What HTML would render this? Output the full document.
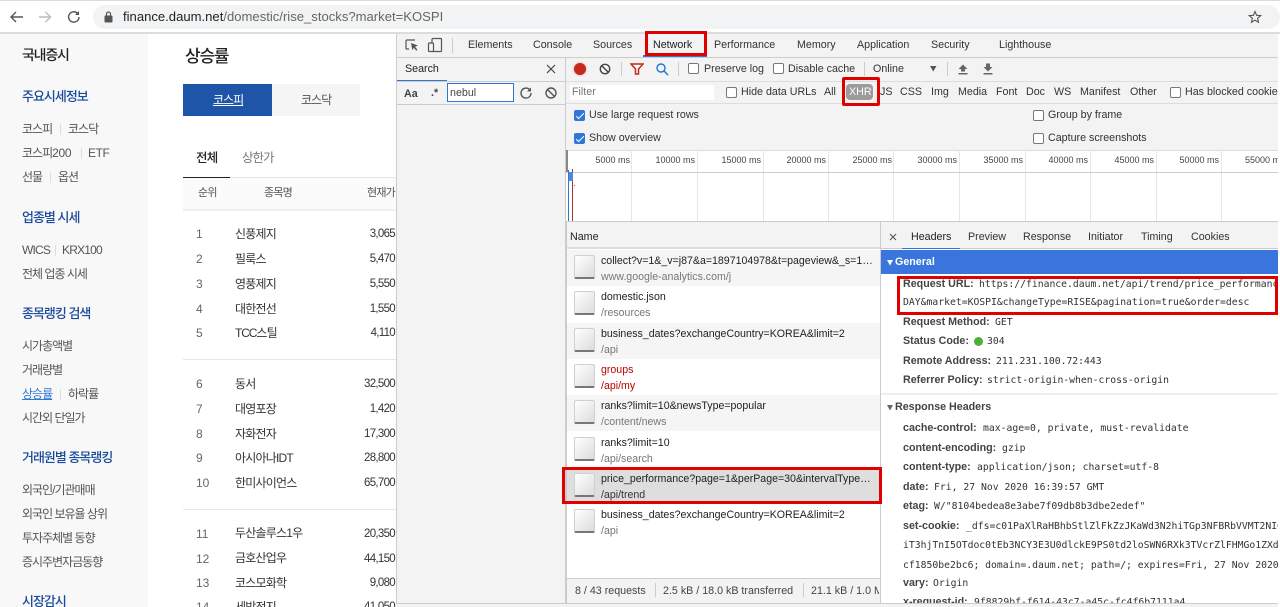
<!DOCTYPE html>
<html lang="ko"><head><meta charset="utf-8"><title>finance.daum.net</title>
<style>
*{box-sizing:border-box}
html,body{margin:0;padding:0;width:1280px;height:607px;overflow:hidden;background:#fff}
body{position:relative;font-family:"Liberation Sans",sans-serif;font-size:10.7px;color:#333}
.a{position:absolute}
.t{position:absolute;white-space:nowrap;line-height:16px;height:16px;margin-top:1px}
.k{font-family:"Liberation Sans","Noto Sans CJK KR",sans-serif;font-size:12px;letter-spacing:-1px;color:#555}
.h{font-family:"Liberation Sans","Noto Sans CJK KR",sans-serif;font-size:13px;letter-spacing:-1px;color:#1a4a9a;font-weight:500}
.n{font-family:"Liberation Sans","Noto Sans CJK KR",sans-serif;font-size:12px;letter-spacing:-.8px;color:#333}
.r{font-size:12px;color:#666;margin-top:0}
.v{font-size:11.5px;letter-spacing:-.7px;color:#333;text-align:right;right:885px;margin-top:0}
.sep{position:absolute;width:1px;height:11px;background:#ddd}
.cb{position:absolute;width:11px;height:11px;border:1px solid #777;border-radius:2px;background:#fff}
.cb.on{background:#2f76d8;border-color:#2f76d8}
.cb.on:after{content:"";position:absolute;left:3px;top:0;width:3px;height:7px;border:solid #fff;border-width:0 1.5px 1.5px 0;transform:rotate(45deg)}
.d{position:absolute;height:1px;background:#ccc}
.vs{position:absolute;width:1px;background:#ddd}
.tick{position:absolute;text-align:right;width:60px;font-size:9px;line-height:14px;top:153px;color:#444;white-space:nowrap}
.gl{position:absolute;width:1px;top:150px;height:72px;background:#e6e6e6}
.row{position:absolute;left:567px;width:313px;height:36.3px;overflow:hidden}
.row i{position:absolute;left:7px;top:5px;width:21px;height:24px;background:linear-gradient(135deg,#fff,#dcdcdc);border:1px solid #d0d0d0;border-bottom:2px solid #777;border-radius:2px}
.row b,.row u{position:absolute;left:34px;font-weight:400;text-decoration:none;white-space:nowrap;line-height:14px;font-size:10.6px}
.row b{top:4px;color:#222}.row u{top:20px;color:#777}
.m{font-family:"DejaVu Sans Mono",monospace;font-size:9.75px;color:#333;margin-top:2px}
.l{font-weight:700;color:#444}
.red{position:absolute;border:3px solid #e00000;z-index:5}
</style></head><body>

<!-- browser bar -->
<div class="a" style="left:0;top:0;width:1280px;height:1px;background:#ddd"></div>
<div class="a" style="left:0;top:32px;width:1280px;height:2px;background:#dcdcdc"></div>
<div class="a" style="left:93px;top:5px;width:1187px;height:24px;border-radius:12px;background:#f1f3f4"></div>
<svg class="a" style="left:8px;top:8px" width="76" height="18" fill="none" stroke-width="1.4">
<path d="M15 9H3.500M8 4 3 9 8 14" stroke="#555"/>
<path d="M31 9h11.500M37.500 4 42.500 9 37.500 14" stroke="#bbb"/>
<path d="M71 9a5.200 5.200 0 1 1-1.500-3.700" stroke="#555"/><path d="M71 3v4h-4z" fill="#555"/>
</svg>
<svg class="a" style="left:104px;top:11px" width="9" height="12"><rect x="0.500" y="4.500" width="8" height="7" rx="1" fill="#555"/><path d="M2.500 5V3a2 2 0 0 1 4 0v2" fill="none" stroke="#555" stroke-width="1.200"/></svg>
<div class="t" style="left:123px;top:8px;font-size:13.08px;color:#666"><span style="color:#222">finance.daum.net</span>/domestic/rise_stocks?market=KOSPI</div>
<svg class="a" style="left:1248px;top:10px" width="14" height="14" fill="none" stroke="#555" stroke-width="1.100"><path d="M7 1.500 8.600 5.300 12.700 5.600 9.600 8.300 10.500 12.300 7 10.200 3.500 12.300 4.400 8.300 1.300 5.600 5.400 5.300Z"/></svg>

<!-- sidebar -->
<div class="a" style="left:0;top:34px;width:148px;height:573px;background:#f8f8f8"></div>
<div class="t" style="left:22px;top:46px;font-family:'Liberation Sans','Noto Sans CJK KR',sans-serif;font-size:14px;font-weight:500;letter-spacing:-1.200px;color:#222">국내증시</div>
<div class="t h" style="left:22px;top:88px">주요시세정보</div>
<div class="t k" style="left:22px;top:120px">코스피</div><div class="sep" style="left:60px;top:124px"></div><div class="t k" style="left:68px;top:120px">코스닥</div>
<div class="t k" style="left:22px;top:144px">코스피<span style="letter-spacing:-.3px">200</span></div><div class="sep" style="left:81px;top:148px"></div><div class="t k" style="left:88px;top:144px;letter-spacing:-.4px">ETF</div>
<div class="t k" style="left:22px;top:168px">선물</div><div class="sep" style="left:50px;top:172px"></div><div class="t k" style="left:58px;top:168px">옵션</div>
<div class="t h" style="left:22px;top:209px">업종별 시세</div>
<div class="t k" style="left:22px;top:241px;letter-spacing:-.8px">WICS</div><div class="sep" style="left:55px;top:245px"></div><div class="t k" style="left:62px;top:241px;letter-spacing:-.8px">KRX100</div>
<div class="t k" style="left:22px;top:265px">전체 업종 시세</div>
<div class="t h" style="left:22px;top:305px">종목랭킹 검색</div>
<div class="t k" style="left:22px;top:337px">시가총액별</div>
<div class="t k" style="left:22px;top:361px">거래량별</div>
<div class="t k" style="left:22px;top:385px;color:#2f78d8;text-decoration:underline">상승률</div><div class="sep" style="left:60px;top:389px"></div><div class="t k" style="left:68px;top:385px">하락률</div>
<div class="t k" style="left:22px;top:409px">시간외 단일가</div>
<div class="t h" style="left:22px;top:449px">거래원별 종목랭킹</div>
<div class="t k" style="left:22px;top:481px">외국인/기관매매</div>
<div class="t k" style="left:22px;top:505px">외국인 보유율 상위</div>
<div class="t k" style="left:22px;top:529px">투자주체별 동향</div>
<div class="t k" style="left:22px;top:553px">증시주변자금동향</div>
<div class="t h" style="left:22px;top:593px">시장감시</div>

<!-- main -->
<div class="t" style="left:185px;top:48px;font-family:'Liberation Sans','Noto Sans CJK KR',sans-serif;font-size:17px;font-weight:500;letter-spacing:-1.200px;color:#222">상승률</div>
<div class="a" style="left:183px;top:84px;width:89px;height:32px;background:#1e55a8"></div>
<div class="a" style="left:272px;top:84px;width:88px;height:32px;background:#f5f5f5"></div>
<div class="t k" style="left:213px;top:91px;color:#fff;text-decoration:underline">코스피</div>
<div class="t k" style="left:301px;top:91px">코스닥</div>
<div class="t" style="left:196px;top:149px;font-family:'Liberation Sans','Noto Sans CJK KR',sans-serif;font-size:12.500px;font-weight:500;letter-spacing:-.8px;color:#222">전체</div>
<div class="t k" style="left:242px;top:149px;font-size:12.500px;color:#777">상한가</div>
<div class="a" style="left:183px;top:177px;width:213px;height:1px;background:#e4e4e4"></div>
<div class="a" style="left:183px;top:177px;width:47px;height:1px;background:#222"></div>
<div class="a" style="left:183px;top:178px;width:213px;height:31px;background:#fbfbfb"></div>
<div class="a" style="left:183px;top:209px;width:213px;height:2px;background:#eee"></div>
<div class="t k" style="left:198px;top:184px;font-size:11px;letter-spacing:-.8px">순위</div>
<div class="t k" style="left:264px;top:184px;font-size:11px;letter-spacing:-.8px">종목명</div>
<div class="t k" style="left:367px;top:184px;font-size:11px;letter-spacing:-.8px">현재가</div>
<div class="a" style="left:183px;top:359px;width:213px;height:1px;background:#e8e8e8"></div>
<div class="a" style="left:183px;top:509px;width:213px;height:1px;background:#e8e8e8"></div>

<div class="t r" style="left:196px;top:226px">1</div><div class="t n" style="left:235px;top:225px">신풍제지</div><div class="t v" style="top:226px">3,065</div>
<div class="t r" style="left:196px;top:251px">2</div><div class="t n" style="left:235px;top:250px">필룩스</div><div class="t v" style="top:251px">5,470</div>
<div class="t r" style="left:196px;top:276px">3</div><div class="t n" style="left:235px;top:275px">영풍제지</div><div class="t v" style="top:276px">5,550</div>
<div class="t r" style="left:196px;top:301px">4</div><div class="t n" style="left:235px;top:300px">대한전선</div><div class="t v" style="top:301px">1,550</div>
<div class="t r" style="left:196px;top:325px">5</div><div class="t n" style="left:235px;top:324px"><span style="letter-spacing:-1.100px">TCC</span>스틸</div><div class="t v" style="top:325px">4,110</div>
<div class="t r" style="left:196px;top:376px">6</div><div class="t n" style="left:235px;top:375px">동서</div><div class="t v" style="top:376px">32,500</div>
<div class="t r" style="left:196px;top:401px">7</div><div class="t n" style="left:235px;top:400px">대영포장</div><div class="t v" style="top:401px">1,420</div>
<div class="t r" style="left:196px;top:426px">8</div><div class="t n" style="left:235px;top:425px">자화전자</div><div class="t v" style="top:426px">17,300</div>
<div class="t r" style="left:196px;top:450px">9</div><div class="t n" style="left:235px;top:449px">아시아나IDT</div><div class="t v" style="top:450px">28,800</div>
<div class="t r" style="left:196px;top:475px">10</div><div class="t n" style="left:235px;top:474px">한미사이언스</div><div class="t v" style="top:475px">65,700</div>
<div class="t r" style="left:196px;top:526px">11</div><div class="t n" style="left:235px;top:524px">두산솔루스1우</div><div class="t v" style="top:526px">20,350</div>
<div class="t r" style="left:196px;top:551px">12</div><div class="t n" style="left:235px;top:549px">금호산업우</div><div class="t v" style="top:551px">44,150</div>
<div class="t r" style="left:196px;top:575px">13</div><div class="t n" style="left:235px;top:574px">코스모화학</div><div class="t v" style="top:575px">9,080</div>
<div class="t r" style="left:196px;top:599px">14</div><div class="t n" style="left:235px;top:598px">세방전지</div><div class="t v" style="top:599px">41,050</div>

<!-- devtools base -->
<div class="a" style="left:396px;top:34px;width:882px;height:573px;background:#f3f3f3;border-left:1px solid #ccc"></div>
<div class="d" style="left:397px;top:57px;width:881px"></div>
<svg class="a" style="left:404px;top:37px" width="50" height="17" fill="none" stroke="#555" stroke-width="1.200">
<path d="M11 3H3a1 1 0 0 0-1 1v7a1 1 0 0 0 1 1h2"/><path d="M7 6l7 2.500-3 1.200 2.500 3-1.200 1-2.500-3-1.500 2.500z" fill="#555" stroke="none"/>
<rect x="28" y="1.500" width="9.500" height="13" rx="1"/><rect x="24.500" y="6" width="5" height="8.500" rx="1" fill="#f3f3f3"/>
</svg>
<div class="a" style="left:452px;top:38px;width:1px;height:15px;background:#ccc"></div>
<div class="t" style="left:468px;top:36px">Elements</div>
<div class="t" style="left:533px;top:36px">Console</div>
<div class="t" style="left:593px;top:36px">Sources</div>
<div class="a" style="left:643px;top:55px;width:64px;height:2px;background:#2f76d8"></div>
<div class="t" style="left:653px;top:36px;color:#222">Network</div>
<div class="t" style="left:714px;top:36px">Performance</div>
<div class="t" style="left:797px;top:36px">Memory</div>
<div class="t" style="left:857px;top:36px">Application</div>
<div class="t" style="left:931px;top:36px">Security</div>
<div class="t" style="left:999px;top:36px">Lighthouse</div>
<div class="red" style="left:645px;top:31px;width:62px;height:25px"></div>

<!-- search panel -->
<div class="vs" style="left:565px;top:58px;height:545px;background:#ccc"></div>
<div class="t" style="left:405px;top:60px;color:#222">Search</div>
<div class="a" style="left:397px;top:80px;width:50px;height:1px;background:#2f76d8"></div>
<div class="d" style="left:397px;top:81px;width:168px"></div>
<svg class="a" style="left:545px;top:63px" width="12" height="12" stroke="#444" stroke-width="1.200"><path d="M2 2l8 8M10 2l-8 8"/></svg>
<div class="t" style="left:404px;top:85px;font-weight:700;color:#444">Aa</div>
<div class="t" style="left:431px;top:84px;font-weight:700;color:#444">.*</div>
<div class="a" style="left:447px;top:83px;width:67px;height:19px;background:#fff;border:1px solid #2f76d8"></div>
<div class="t" style="left:450px;top:84px;color:#444">nebul</div>
<svg class="a" style="left:519px;top:86px" width="42" height="14" fill="none" stroke="#555" stroke-width="1.400"><path d="M12 7a5 5 0 1 1-1.500-3.500"/><path d="M12 1.500v4H8z" fill="#555" stroke="none"/><circle cx="32" cy="7" r="5"/><path d="M28.500 3.500l7 7"/></svg>
<div class="d" style="left:397px;top:104px;width:168px"></div>

<!-- network toolbar -->
<div class="a" style="left:574px;top:63px;width:12px;height:12px;border-radius:50%;background:#c5281c;box-shadow:0 0 2px #e88"></div>
<svg class="a" style="left:599px;top:63px" width="12" height="12" fill="none" stroke="#444" stroke-width="1.400"><circle cx="6" cy="6" r="4.700"/><path d="M2.700 2.700l6.600 6.600"/></svg>
<div class="a" style="left:621px;top:62px;width:1px;height:14px;background:#ccc"></div>
<svg class="a" style="left:630px;top:63px" width="14" height="12"><path d="M1 1h12L8.500 6v5h-3V6z" fill="#fff" stroke="#c5281c" stroke-width="1.500"/></svg>
<svg class="a" style="left:655px;top:62px" width="14" height="14" fill="none" stroke="#1a73d8" stroke-width="1.400"><circle cx="6" cy="6" r="4"/><path d="M9 9l4 4"/></svg>
<div class="a" style="left:678px;top:62px;width:1px;height:14px;background:#ccc"></div>
<div class="cb" style="left:688px;top:63px"></div><div class="t" style="left:704px;top:60px">Preserve log</div>
<div class="cb" style="left:773px;top:63px"></div><div class="t" style="left:788px;top:60px">Disable cache</div>
<div class="a" style="left:864px;top:62px;width:1px;height:14px;background:#ccc"></div>
<div class="t" style="left:873px;top:60px">Online</div>
<svg class="a" style="left:929px;top:65px" width="9" height="7"><path d="M1 1h6.500L4.200 6.500z" fill="#555"/></svg>
<div class="a" style="left:947px;top:62px;width:1px;height:14px;background:#ccc"></div>
<svg class="a" style="left:957px;top:62px" width="38" height="14" fill="#666"><path d="M6 2.500 10.500 7H8v2.500H4V7H1.500zM1.500 11h9v1.500h-9z"/><path d="M29 1.500h4V5h2.500L31 9.500 26.500 5H29zM26.500 11h9v1.500h-9z"/></svg>
<div class="d" style="left:566px;top:81px;width:712px;background:#ddd"></div>

<!-- filter row -->
<div class="a" style="left:570px;top:85px;width:144px;height:15px;background:#fff"></div>
<div class="t" style="left:572px;top:83px;color:#777">Filter</div>
<div class="cb" style="left:726px;top:87px"></div><div class="t" style="left:741px;top:83px">Hide data URLs</div>
<div class="t" style="left:824px;top:83px">All</div>
<div class="a" style="left:846px;top:84px;width:27px;height:16px;border-radius:4px;background:#9b9b9b"></div>
<div class="t" style="left:849px;top:83px;color:#fff">XHR</div>
<div class="red" style="left:842px;top:77px;width:38px;height:29px;border-radius:2px"></div>
<div class="t" style="left:880px;top:83px">JS</div>
<div class="t" style="left:900px;top:83px">CSS</div>
<div class="t" style="left:931px;top:83px">Img</div>
<div class="t" style="left:958px;top:83px">Media</div>
<div class="t" style="left:996px;top:83px">Font</div>
<div class="t" style="left:1026px;top:83px">Doc</div>
<div class="t" style="left:1054px;top:83px">WS</div>
<div class="t" style="left:1080px;top:83px">Manifest</div>
<div class="t" style="left:1130px;top:83px">Other</div>
<div class="cb" style="left:1170px;top:87px"></div><div class="t" style="left:1185px;top:83px;width:93px;overflow:hidden">Has blocked cookies</div>
<div class="d" style="left:566px;top:103px;width:712px;background:#ddd"></div>

<!-- settings -->
<div class="cb on" style="left:574px;top:110px"></div><div class="t" style="left:589px;top:106px">Use large request rows</div>
<div class="cb on" style="left:574px;top:133px"></div><div class="t" style="left:589px;top:129px">Show overview</div>
<div class="cb" style="left:1033px;top:110px"></div><div class="t" style="left:1048px;top:106px">Group by frame</div>
<div class="cb" style="left:1033px;top:133px"></div><div class="t" style="left:1048px;top:129px">Capture screenshots</div>

<!-- overview -->
<div class="a" style="left:566px;top:150px;width:712px;height:72px;background:#fff;border-top:1px solid #ddd"></div>
<div class="a" style="left:566px;top:150px;width:2px;height:22px;background:#888"></div>
<div class="gl" style="left:631px"></div><div class="gl" style="left:697px"></div><div class="gl" style="left:763px"></div><div class="gl" style="left:828px"></div><div class="gl" style="left:893px"></div><div class="gl" style="left:959px"></div><div class="gl" style="left:1025px"></div><div class="gl" style="left:1090px"></div><div class="gl" style="left:1156px"></div><div class="gl" style="left:1221px"></div>
<div class="tick" style="left:570px">5000 ms</div><div class="tick" style="left:635px">10000 ms</div><div class="tick" style="left:701px">15000 ms</div><div class="tick" style="left:766px">20000 ms</div><div class="tick" style="left:832px">25000 ms</div><div class="tick" style="left:897px">30000 ms</div><div class="tick" style="left:963px">35000 ms</div><div class="tick" style="left:1028px">40000 ms</div><div class="tick" style="left:1094px">45000 ms</div><div class="tick" style="left:1159px">50000 ms</div>
<div class="a" style="left:1245px;top:153px;width:33px;overflow:hidden;font-size:9px;line-height:14px;color:#444;white-space:nowrap">55000 ms</div>
<div class="a" style="left:566px;top:172px;width:712px;height:1px;background:#ccc"></div>
<div class="a" style="left:568px;top:170px;width:1px;height:51px;background:#2f76d8"></div>
<div class="a" style="left:572px;top:169px;width:1px;height:52px;background:#a33"></div>
<div class="a" style="left:569px;top:172px;width:4px;height:9px;background:#4a8ae0"></div>
<div class="a" style="left:574px;top:185px;width:1px;height:1px;background:#2f76d8"></div>
<div class="a" style="left:566px;top:221px;width:712px;height:1px;background:#ccc"></div>

<!-- name table -->
<div class="a" style="left:566px;top:222px;width:314px;height:381px;background:#fff;border-left:1px solid #ccc"></div>
<div class="a" style="left:567px;top:222px;width:313px;height:27px;background:#f3f3f3;border-bottom:2px solid #ddd"></div>
<div class="t" style="left:570px;top:228px;color:#222">Name</div>
<div class="vs" style="left:880px;top:222px;height:381px;background:#ccc"></div>

<div class="row" style="top:250px;background:#f5f5f5"><i></i><b>collect?v=1&amp;_v=j87&amp;a=1897104978&amp;t=pageview&amp;_s=1…</b><u>www.google-analytics.com/j</u></div>
<div class="row" style="top:286.300px"><i></i><b>domestic.json</b><u>/resources</u></div>
<div class="row" style="top:322.600px;background:#f5f5f5"><i></i><b>business_dates?exchangeCountry=KOREA&amp;limit=2</b><u>/api</u></div>
<div class="row" style="top:358.900px"><i></i><b style="color:#b00">groups</b><u style="color:#b00">/api/my</u></div>
<div class="row" style="top:395.200px;background:#f5f5f5"><i></i><b>ranks?limit=10&amp;newsType=popular</b><u>/content/news</u></div>
<div class="row" style="top:431.500px"><i></i><b>ranks?limit=10</b><u>/api/search</u></div>
<div class="row" style="top:467.800px;background:#dedede"><i></i><b>price_performance?page=1&amp;perPage=30&amp;intervalType…</b><u style="color:#333">/api/trend</u></div>
<div class="row" style="top:504.100px"><i></i><b>business_dates?exchangeCountry=KOREA&amp;limit=2</b><u>/api</u></div>
<div class="red" style="left:562px;top:467px;width:320px;height:37px"></div>

<div class="a" style="left:567px;top:578px;width:313px;height:25px;background:#f3f3f3;border-top:1px solid #ccc;overflow:hidden"></div>
<div class="t" style="left:575px;top:582px;color:#444">8 / 43 requests</div>
<div class="a" style="left:655px;top:583px;width:1px;height:14px;background:#ccc"></div>
<div class="t" style="left:663px;top:582px;color:#444">2.5 kB / 18.0 kB transferred</div>
<div class="a" style="left:803px;top:583px;width:1px;height:14px;background:#ccc"></div>
<div class="t" style="left:811px;top:582px;width:68px;overflow:hidden;color:#444">21.1 kB / 1.0 MB</div>

<!-- right panel -->
<div class="a" style="left:881px;top:222px;width:397px;height:381px;background:#fff;overflow:hidden">
<div class="a" style="left:0;top:0;width:397px;height:27px;background:#f3f3f3;border-bottom:1px solid #ccc"></div>
</div>
<svg class="a" style="left:889px;top:233px" width="8" height="8" stroke="#555" stroke-width="1.100"><path d="M1 1l6 6M7 1l-6 6"/></svg>
<div class="t" style="left:911px;top:228px;color:#222">Headers</div>
<div class="t" style="left:968px;top:228px">Preview</div>
<div class="t" style="left:1023px;top:228px">Response</div>
<div class="t" style="left:1088px;top:228px">Initiator</div>
<div class="t" style="left:1141px;top:228px">Timing</div>
<div class="t" style="left:1191px;top:228px">Cookies</div>
<div class="a" style="left:902px;top:248px;width:58px;height:1px;background:#2f76d8"></div>
<div class="a" style="left:881px;top:250px;width:397px;height:24px;background:#3a75dd"></div>
<svg class="a" style="left:887px;top:260px" width="6" height="6"><path d="M0 0h6L3 5.500z" fill="#fff"/></svg>
<div class="t" style="left:895px;top:253px;font-weight:700;color:#fff">General</div>

<div class="t l" style="left:903px;top:275px">Request URL:</div><div class="t m" style="left:979px;top:275px;width:297px;overflow:hidden">https://finance.daum.net/api/trend/price_performance</div>
<div class="t m" style="left:903px;top:293px">DAY&amp;market=KOSPI&amp;changeType=RISE&amp;pagination=true&amp;order=desc</div>
<div class="red" style="left:897px;top:276px;width:381px;height:39px"></div>
<div class="t l" style="left:903px;top:313px">Request Method:</div><div class="t m" style="left:995px;top:313px">GET</div>
<div class="t l" style="left:903px;top:332px">Status Code:</div><div class="a" style="left:974px;top:337px;width:9px;height:9px;border-radius:50%;background:#4caf3a"></div><div class="t m" style="left:987px;top:332px">304</div>
<div class="t l" style="left:903px;top:352px">Remote Address:</div><div class="t m" style="left:996px;top:352px">211.231.100.72:443</div>
<div class="t l" style="left:903px;top:371px">Referrer Policy:</div><div class="t m" style="left:987px;top:371px">strict-origin-when-cross-origin</div>
<div class="a" style="left:881px;top:393px;width:397px;height:2px;background:#eee"></div>
<svg class="a" style="left:887px;top:405px" width="6" height="6"><path d="M0 0h6L3 5.500z" fill="#666"/></svg>
<div class="t l" style="left:895px;top:398px">Response Headers</div>

<div class="t l" style="left:903px;top:419px">cache-control:</div><div class="t m" style="left:983px;top:419px">max-age=0, private, must-revalidate</div>
<div class="t l" style="left:903px;top:439px">content-encoding:</div><div class="t m" style="left:1002px;top:439px">gzip</div>
<div class="t l" style="left:903px;top:458px">content-type:</div><div class="t m" style="left:977px;top:458px">application/json; charset=utf-8</div>
<div class="t l" style="left:903px;top:478px">date:</div><div class="t m" style="left:934px;top:478px">Fri, 27 Nov 2020 16:39:57 GMT</div>
<div class="t l" style="left:903px;top:497px">etag:</div><div class="t m" style="left:934px;top:497px">W/"8104bedea8e3abe7f09db8b3dbe2edef"</div>
<div class="t l" style="left:903px;top:517px">set-cookie:</div><div class="t m" style="left:966px;top:517px;width:312px;overflow:hidden">_dfs=c01PaXlRaHBhbStlZlFkZzJKaWd3N2hiTGp3NFBRbVVMT2NIO</div>
<div class="t m" style="left:903px;top:536px;width:375px;overflow:hidden">iT3hjTnI5OTdoc0tEb3NCY3E3U0dlckE9PS0td2loSWN6RXk3TVcrZlFHMGo1ZXd</div>
<div class="t m" style="left:903px;top:556px;width:375px;overflow:hidden">cf1850be2bc6; domain=.daum.net; path=/; expires=Fri, 27 Nov 2020</div>
<div class="t l" style="left:903px;top:574px">vary:</div><div class="t m" style="left:933px;top:574px">Origin</div>
<div class="t l" style="left:903px;top:593px">x-request-id:</div><div class="t m" style="left:974px;top:593px">9f8829bf-f614-43c7-a45c-fc4f6b7111a4</div>

<div class="a" style="left:396px;top:603px;width:882px;height:4px;background:#f3f3f3;border-top:1px solid #ccc;z-index:6"></div>
</body></html>
